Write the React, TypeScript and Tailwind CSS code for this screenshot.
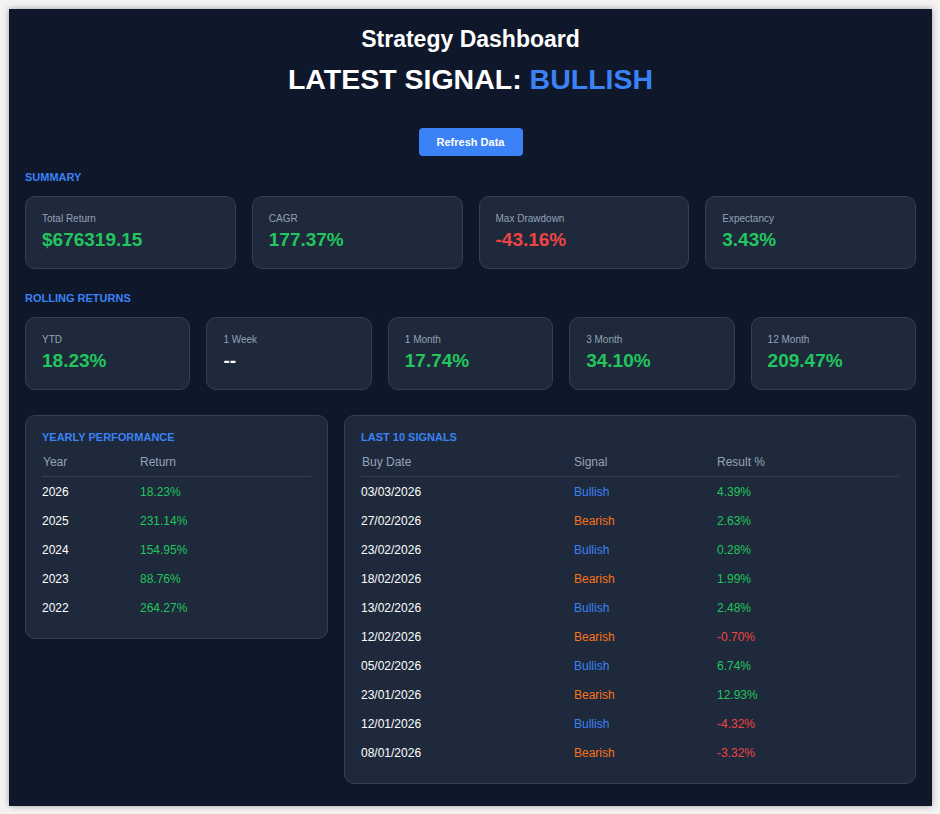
const summary = [
  { label: "Total Return", value: "$676319.15", tone: "text-[#22c55e]" },
  { label: "CAGR", value: "177.37%", tone: "text-[#22c55e]" },
  { label: "Max Drawdown", value: "-43.16%", tone: "text-[#ef4444]" },
  { label: "Expectancy", value: "3.43%", tone: "text-[#22c55e]" },
];

const rolling = [
  { label: "YTD", value: "18.23%", tone: "text-[#22c55e]" },
  { label: "1 Week", value: "--", tone: "text-white" },
  { label: "1 Month", value: "17.74%", tone: "text-[#22c55e]" },
  { label: "3 Month", value: "34.10%", tone: "text-[#22c55e]" },
  { label: "12 Month", value: "209.47%", tone: "text-[#22c55e]" },
];

const yearly = [
  ["2026", "18.23%"],
  ["2025", "231.14%"],
  ["2024", "154.95%"],
  ["2023", "88.76%"],
  ["2022", "264.27%"],
];

const signals = [
  ["03/03/2026", "Bullish", "4.39%"],
  ["27/02/2026", "Bearish", "2.63%"],
  ["23/02/2026", "Bullish", "0.28%"],
  ["18/02/2026", "Bearish", "1.99%"],
  ["13/02/2026", "Bullish", "2.48%"],
  ["12/02/2026", "Bearish", "-0.70%"],
  ["05/02/2026", "Bullish", "6.74%"],
  ["23/01/2026", "Bearish", "12.93%"],
  ["12/01/2026", "Bullish", "-4.32%"],
  ["08/01/2026", "Bearish", "-3.32%"],
];

function StatCard({ label, value, tone }: { label: string; value: string; tone: string }) {
  return (
    <div className="rounded-[10px] border border-[#334155] bg-[#1e293b] px-4 pt-4 pb-4">
      <div className="text-[10px] leading-[12px] font-medium text-[#94a3b8] mb-[3px]">{label}</div>
      <div className={`text-[19px] leading-[24px] font-bold ${tone}`}>{value}</div>
    </div>
  );
}

function SectionLabel({ children }: { children: string }) {
  return (
    <div className="text-[11px] leading-[14px] font-bold uppercase text-[#3b82f6]">{children}</div>
  );
}

export default function App() {
  return (
    <div
      className="h-[814px] w-[940px] bg-[#f3f3f3] pl-[9px] pt-[9px] pr-[8px] pb-[8px]"
      style={{ fontFamily: '"Liberation Sans", Arial, sans-serif' }}
    >
      <div className="h-[797px] bg-[#0f172a] px-4 pt-4 shadow-[0_0_6px_rgba(0,0,0,0.35)]">
        {/* Header */}
        <h1 className="text-center text-[23px] leading-[28px] font-bold text-white">Strategy Dashboard</h1>
        <h2 className="mt-[9px] text-center text-[28.5px] leading-[34px] font-bold text-white">
          LATEST SIGNAL: <span className="text-[#3b82f6]">BULLISH</span>
        </h2>
        <div className="mt-[32px] flex justify-center">
          <button className="h-[28px] w-[104px] rounded-[4px] bg-[#3b82f6] text-[11px] font-bold text-white">
            Refresh Data
          </button>
        </div>

        {/* Summary */}
        <div className="mt-[14px] mb-3">
          <SectionLabel>Summary</SectionLabel>
        </div>
        <div className="grid grid-cols-4 gap-4">
          {summary.map((s) => (
            <StatCard key={s.label} {...s} />
          ))}
        </div>

        {/* Rolling returns */}
        <div className="mt-[22px] mb-3">
          <SectionLabel>Rolling Returns</SectionLabel>
        </div>
        <div className="grid grid-cols-5 gap-4">
          {rolling.map((s) => (
            <StatCard key={s.label} {...s} />
          ))}
        </div>

        {/* Tables */}
        <div className="mt-[25px] flex items-start gap-4">
          <div className="w-[303px] shrink-0 rounded-[10px] border border-[#334155] bg-[#1e293b] px-4 pt-[14px] pb-4">
            <div className="mb-[4px]">
              <SectionLabel>Yearly Performance</SectionLabel>
            </div>
            <div className="grid h-[29px] grid-cols-[98px_1fr] items-center border-b border-[#334155] text-[12px] text-[#94a3b8]">
              <span className="pl-[1px]">Year</span>
              <span>Return</span>
            </div>
            {yearly.map(([year, ret]) => (
              <div key={year} className="grid h-[29px] grid-cols-[98px_1fr] items-center text-[12px]">
                <span className="text-white">{year}</span>
                <span className="text-[#22c55e]">{ret}</span>
              </div>
            ))}
          </div>

          <div className="flex-1 rounded-[10px] border border-[#334155] bg-[#1e293b] px-4 pt-[14px] pb-4">
            <div className="mb-[4px]">
              <SectionLabel>Last 10 Signals</SectionLabel>
            </div>
            <div className="grid h-[29px] grid-cols-[213px_143px_1fr] items-center border-b border-[#334155] text-[12px] text-[#94a3b8]">
              <span className="pl-[1px]">Buy Date</span>
              <span>Signal</span>
              <span>Result %</span>
            </div>
            {signals.map(([date, sig, res]) => (
              <div key={date + sig} className="grid h-[29px] grid-cols-[213px_143px_1fr] items-center text-[12px]">
                <span className="text-white">{date}</span>
                <span className={sig === "Bullish" ? "text-[#3b82f6]" : "text-[#f97316]"}>{sig}</span>
                <span className={res.startsWith("-") ? "text-[#ef4444]" : "text-[#22c55e]"}>{res}</span>
              </div>
            ))}
          </div>
        </div>
      </div>
    </div>
  );
}
